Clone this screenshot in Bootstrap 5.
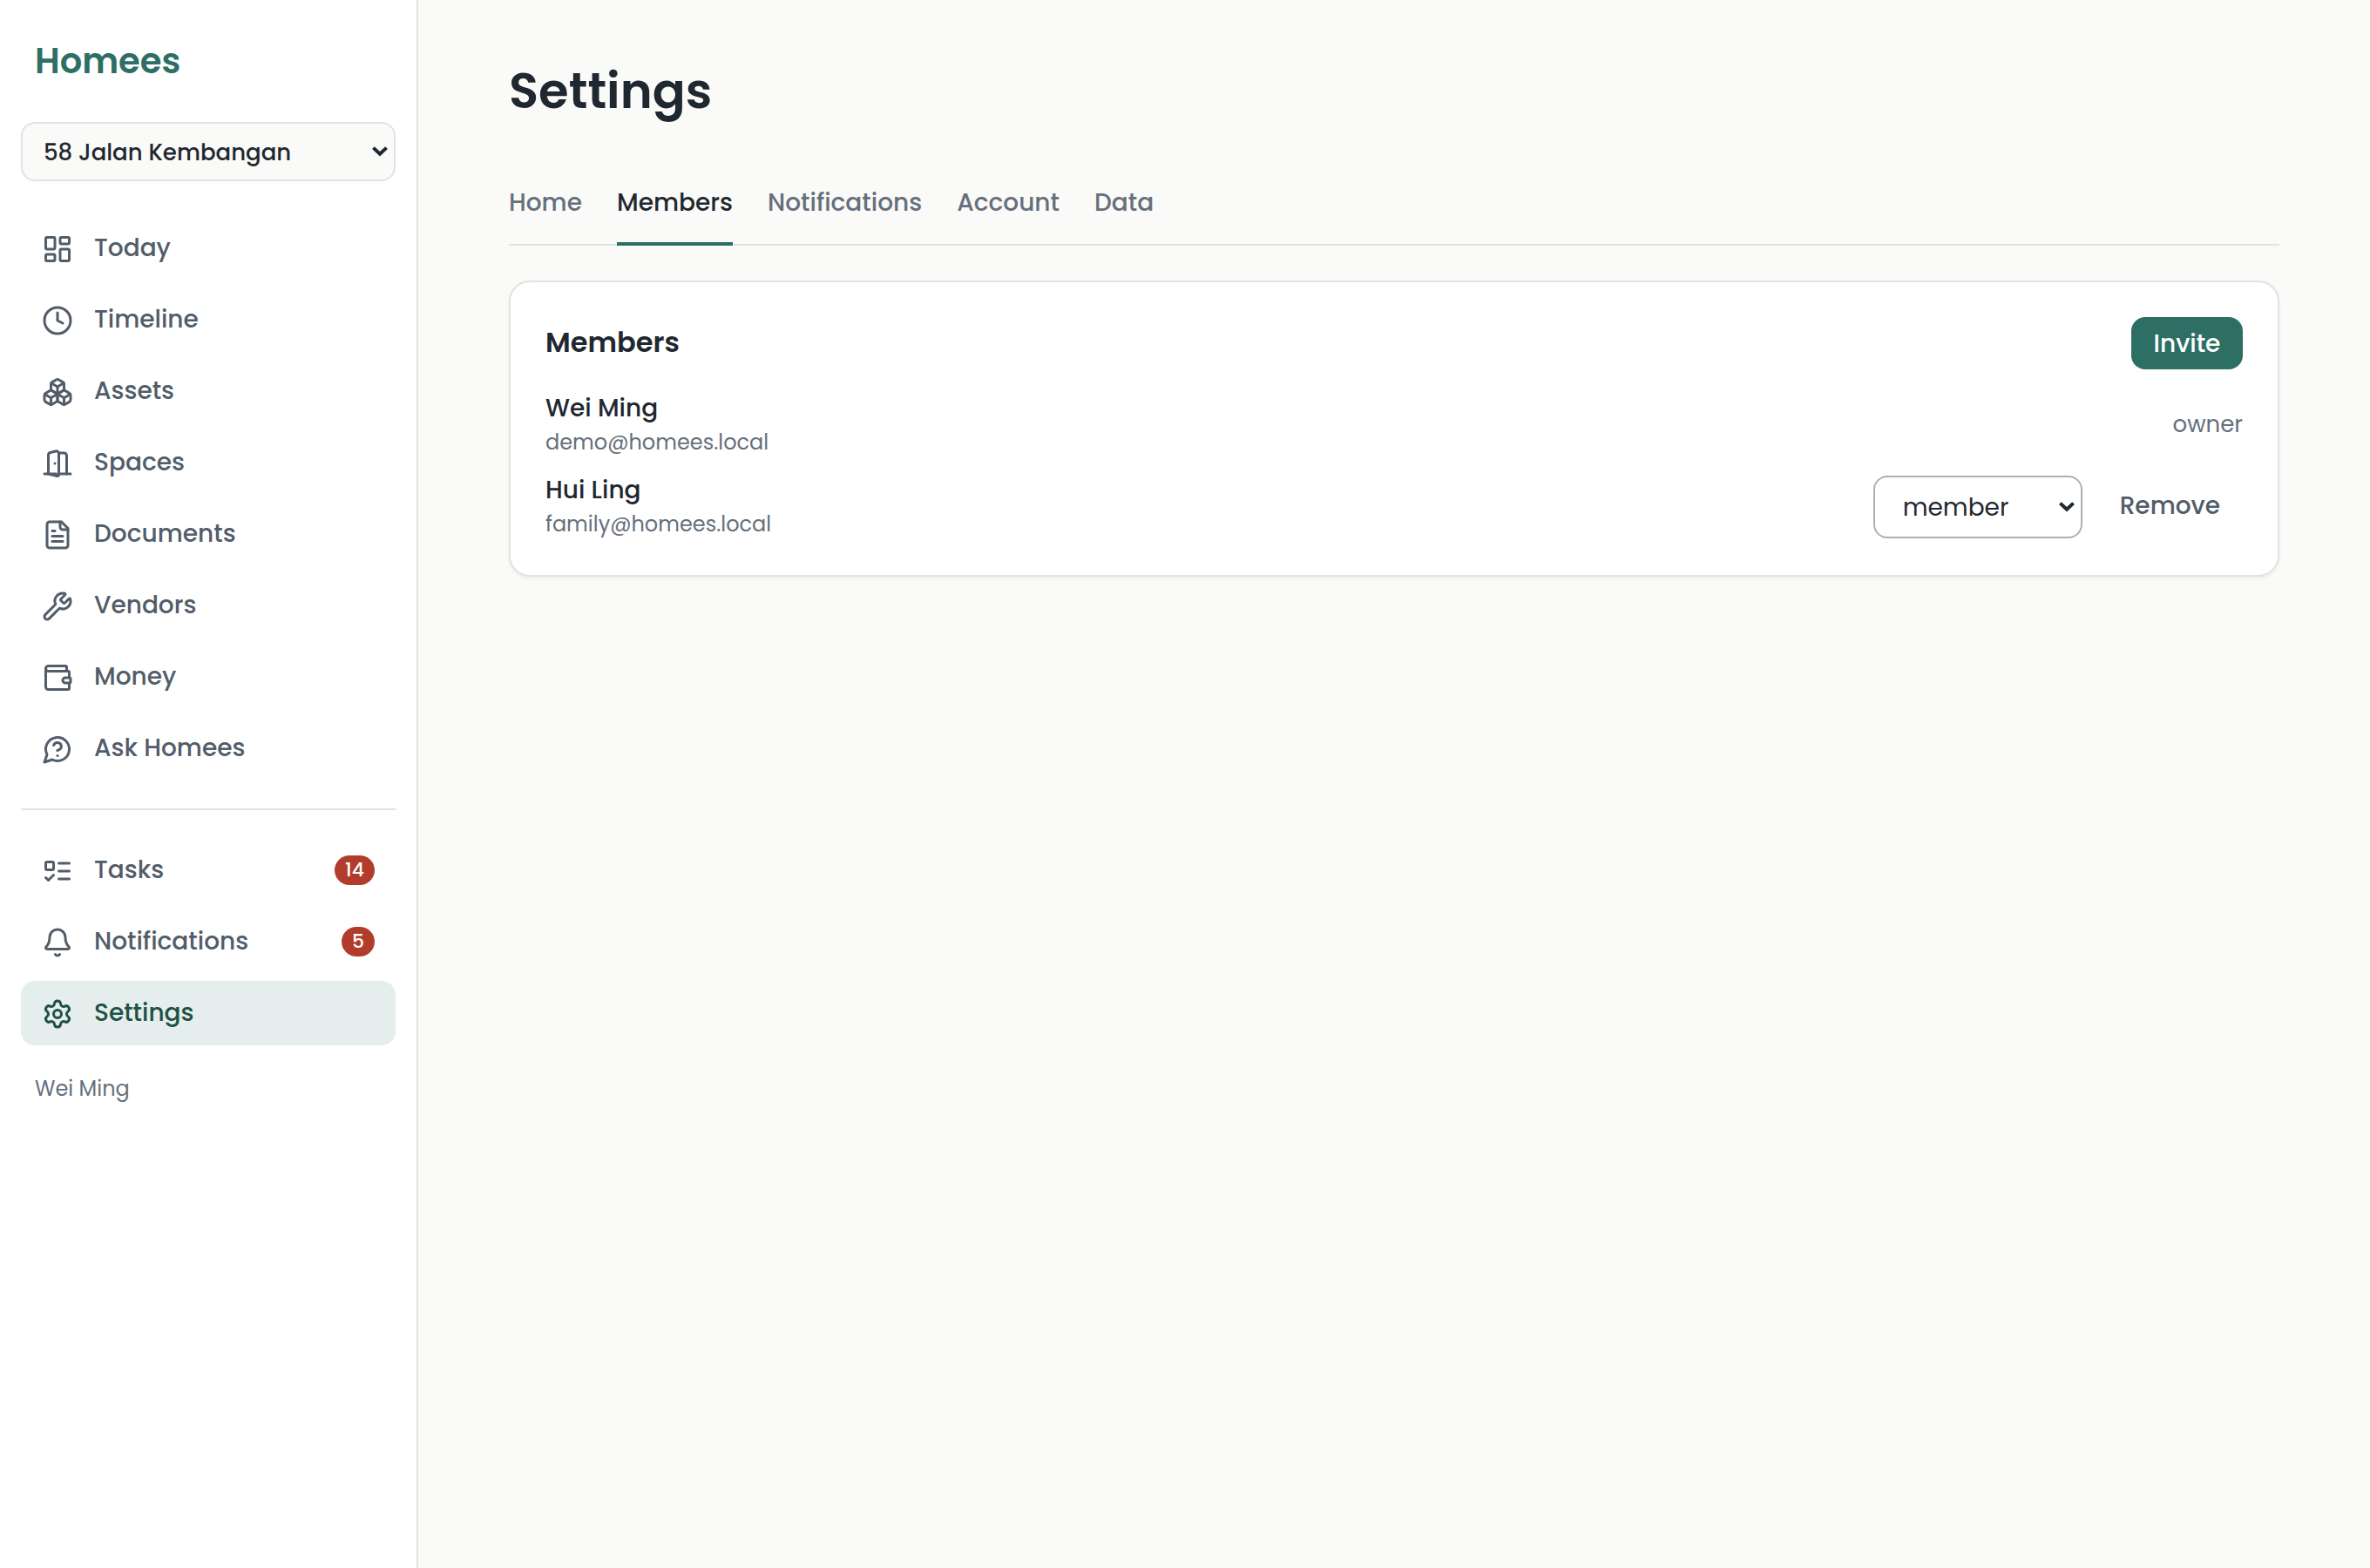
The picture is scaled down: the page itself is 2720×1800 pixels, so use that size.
<!DOCTYPE html>
<html lang="en">
<head>
<meta charset="utf-8">
<meta name="viewport" content="width=device-width, initial-scale=1">
<title>Homees – Settings</title>
<link href="https://cdn.jsdelivr.net/npm/bootstrap@5.3.0/dist/css/bootstrap.min.css" rel="stylesheet">
<style>
  body{font-family:Poppins,Inter,"Open Sans",sans-serif;font-size:28px;line-height:42px;color:#1f2830;background:#fafaf8}
  .side{width:480px;padding:0 24px;background:#fff;border-right:2px solid #e2e2df}
  .brand{font-size:40px;line-height:60px;font-weight:600;color:#2d6f65;padding:40px 16px}
  .form-select{--bs-form-select-bg-img:url("data:image/svg+xml,%3csvg xmlns='http://www.w3.org/2000/svg' viewBox='0 0 18 12'%3e%3cpath d='M1.4 1.6 9 8.8l7.6-7.2' fill='none' stroke='%231f2933' stroke-width='4'/%3e%3c/svg%3e");color:#1f2830;background-size:18px 12px;border-width:2px;border-radius:16px}
  .home-pick{height:68px;padding:2px 40px 0 24px;font-size:26px;line-height:39px;font-weight:500;background-color:#fafaf8;border-color:#e2e2df;background-position:right 7px center;margin-bottom:40px}
  .side .nav{gap:8px}
  .side .nav-link{display:flex;align-items:center;gap:24px;padding:16px 24px;border-radius:16px;font-weight:500;color:#525d69}
  .side .nav-link.active{background:#e5eeec;color:#205046}
  .side .nav-link svg{width:36px;height:36px;flex:none;margin-top:2px;fill:none;stroke:currentColor;stroke-width:2;stroke-linecap:round;stroke-linejoin:round}
  .split{height:2px;background:#e2e2df;margin:32px 0}
  .side .badge{background:#b23c2b;font-size:22px;line-height:34px;height:34px;padding:0 12px;font-weight:500}
  .whoami{font-size:24px;line-height:36px;color:#65707c;padding:32px 16px}
  .main{padding:65px 104px}
  h1{font-size:56px;line-height:80px;font-weight:600;margin:0 0 43px}
  .tabs{gap:40px;border-bottom:2px solid #e2e2df;margin-bottom:40px}
  .tabs .nav-link{padding:24px 0;border-bottom:4px solid transparent;margin-bottom:-2px;font-weight:500;color:#65707c}
  .tabs .nav-link.active{color:#1f2830;border-color:#2d6f65}
  .card{--bs-card-border-color:#e2e2df;border-width:2px;border-radius:24px;padding:40px;box-shadow:0 2px 4px rgba(31,41,51,.06);color:#1f2830}
  .card h2{font-size:32px;line-height:48px;font-weight:600;margin:0 0 2px}
  .card .btn{font-size:28px;line-height:42px;font-weight:500;padding:7px 24px;border:2px solid transparent;border-radius:16px;color:#525d69}
  .card .btn-invite{width:128px;padding:8px 0 6px;background:#2d6f65;color:#fff}
  .subtle{color:#65707c}
  .mail{font-size:24px;line-height:36px}
  .owner{font-size:26px}
  .role{width:240px;height:72px;margin:1px 1px -1px 0;padding:2px 40px 0 32px;font-size:28px;line-height:42px;border-color:#b0b0ab;background-position:right 7px center}
</style>
</head>
<body>
<div class="d-flex min-vh-100">
  <aside class="side flex-shrink-0">
    <div class="brand">Homees</div>
    <select class="form-select home-pick" aria-label="Home"><option>58 Jalan Kembangan</option></select>
    <nav class="nav flex-column">
      <a class="nav-link" href="#"><svg viewBox="0 0 24 24"><rect width="7" height="9" x="3" y="3" rx="1"/><rect width="7" height="5" x="14" y="3" rx="1"/><rect width="7" height="9" x="14" y="12" rx="1"/><rect width="7" height="5" x="3" y="16" rx="1"/></svg>Today</a>
      <a class="nav-link" href="#"><svg viewBox="0 0 24 24"><circle cx="12" cy="12" r="10"/><path d="M12 6v6l4 2"/></svg>Timeline</a>
      <a class="nav-link" href="#"><svg viewBox="0 0 24 24"><path d="M2.97 12.92A2 2 0 0 0 2 14.63v3.24a2 2 0 0 0 .97 1.71l3 1.8a2 2 0 0 0 2.06 0L12 19v-5.5l-5-3-4.03 2.42Z"/><path d="m7 16.5-4.74-2.85"/><path d="m7 16.5 5-3"/><path d="M7 16.5v5.17"/><path d="M12 13.5V19l3.97 2.38a2 2 0 0 0 2.06 0l3-1.8a2 2 0 0 0 .97-1.71v-3.24a2 2 0 0 0-.97-1.71L17 10.5l-5 3Z"/><path d="m17 16.5-5-3"/><path d="m17 16.5 4.74-2.85"/><path d="M17 16.5v5.17"/><path d="M7.97 4.42A2 2 0 0 0 7 6.13v4.37l5 3 5-3V6.13a2 2 0 0 0-.97-1.71l-3-1.8a2 2 0 0 0-2.06 0l-3 1.8Z"/><path d="M12 8 7.26 5.15"/><path d="m12 8 4.74-2.85"/><path d="M12 13.5V8"/></svg>Assets</a>
      <a class="nav-link" href="#"><svg viewBox="0 0 24 24"><path d="M11 20H2"/><path d="M11 4.562v16.157a1 1 0 0 0 1.242.97L19 20V5.562a2 2 0 0 0-1.515-1.94l-4-1A2 2 0 0 0 11 4.561z" transform="matrix(-1 0 0 1 24 0)"/><path d="M13 4h4a2 2 0 0 1 2 2v14"/><path d="M10 12h.01"/><path d="M22 20h-9"/></svg>Spaces</a>
      <a class="nav-link" href="#"><svg viewBox="0 0 24 24"><path d="M15 2H6a2 2 0 0 0-2 2v16a2 2 0 0 0 2 2h12a2 2 0 0 0 2-2V7Z"/><path d="M14 2v4a2 2 0 0 0 2 2h4"/><path d="M10 9H8"/><path d="M16 13H8"/><path d="M16 17H8"/></svg>Documents</a>
      <a class="nav-link" href="#"><svg viewBox="0 0 24 24"><path d="M14.7 6.3a1 1 0 0 0 0 1.4l1.6 1.6a1 1 0 0 0 1.4 0l3.106-3.105c.32-.322.863-.22.983.218a6 6 0 0 1-8.259 7.057l-7.91 7.91a1 1 0 0 1-2.999-3l7.91-7.91a6 6 0 0 1 7.057-8.259c.438.12.54.662.219.984z"/></svg>Vendors</a>
      <a class="nav-link" href="#"><svg viewBox="0 0 24 24"><path d="M19 7V4a1 1 0 0 0-1-1H5a2 2 0 0 0 0 4h15a1 1 0 0 1 1 1v4h-3a2 2 0 0 0 0 4h3a1 1 0 0 0 1-1v-2a1 1 0 0 0-1-1"/><path d="M3 5v14a2 2 0 0 0 2 2h15a1 1 0 0 0 1-1v-4"/></svg>Money</a>
      <a class="nav-link" href="#"><svg viewBox="0 0 24 24"><path d="M7.9 20A9 9 0 1 0 4 16.1L2 22Z"/><path d="M9.09 9a3 3 0 0 1 5.83 1c0 2-3 3-3 3"/><path d="M12 17h.01"/></svg>Ask Homees</a>
    </nav>
    <div class="split"></div>
    <nav class="nav flex-column">
      <a class="nav-link" href="#"><svg viewBox="0 0 24 24"><rect x="3" y="5" width="6" height="6" rx="1"/><path d="m3 17 2 2 4-4"/><path d="M13 6h8"/><path d="M13 12h8"/><path d="M13 18h8"/></svg>Tasks<span class="badge rounded-pill ms-auto">14</span></a>
      <a class="nav-link" href="#"><svg viewBox="0 0 24 24"><path d="M10.268 21a2 2 0 0 0 3.464 0"/><path d="M3.262 15.326A1 1 0 0 0 4 17h16a1 1 0 0 0 .74-1.673C19.41 13.956 18 12.499 18 8A6 6 0 0 0 6 8c0 4.499-1.411 5.956-2.738 7.326"/></svg>Notifications<span class="badge rounded-pill ms-auto">5</span></a>
      <a class="nav-link active" href="#"><svg viewBox="0 0 24 24"><path d="M9.671 4.136a2.34 2.34 0 0 1 4.659 0 2.34 2.34 0 0 0 3.319 1.915 2.34 2.34 0 0 1 2.33 4.033 2.34 2.34 0 0 0 0 3.831 2.34 2.34 0 0 1-2.33 4.033 2.34 2.34 0 0 0-3.319 1.915 2.34 2.34 0 0 1-4.659 0 2.34 2.34 0 0 0-3.32-1.915 2.34 2.34 0 0 1-2.33-4.033 2.34 2.34 0 0 0 0-3.831A2.34 2.34 0 0 1 6.35 6.051a2.34 2.34 0 0 0 3.319-1.915"/><circle cx="12" cy="12" r="3"/></svg>Settings</a>
    </nav>
    <div class="whoami">Wei Ming</div>
  </aside>
  <main class="main flex-grow-1">
    <h1>Settings</h1>
    <nav class="nav tabs">
      <a class="nav-link" href="#">Home</a>
      <a class="nav-link active" href="#">Members</a>
      <a class="nav-link" href="#">Notifications</a>
      <a class="nav-link" href="#">Account</a>
      <a class="nav-link" href="#">Data</a>
    </nav>
    <section class="card">
      <div class="d-flex justify-content-between align-items-center mb-4">
        <h2>Members</h2>
        <button class="btn btn-invite">Invite</button>
      </div>
      <div class="d-flex justify-content-between align-items-center mb-3">
        <div><div class="fw-medium">Wei Ming</div><div class="mail subtle">demo@homees.local</div></div>
        <span class="subtle owner">owner</span>
      </div>
      <div class="d-flex justify-content-between align-items-center">
        <div><div class="fw-medium">Hui Ling</div><div class="mail subtle">family@homees.local</div></div>
        <div class="d-flex align-items-center gap-3">
          <select class="form-select role" aria-label="Role"><option>member</option></select>
          <button class="btn">Remove</button>
        </div>
      </div>
    </section>
  </main>
</div>
<script src="https://cdn.jsdelivr.net/npm/bootstrap@5.3.0/dist/js/bootstrap.bundle.min.js"></script>
</body>
</html>
